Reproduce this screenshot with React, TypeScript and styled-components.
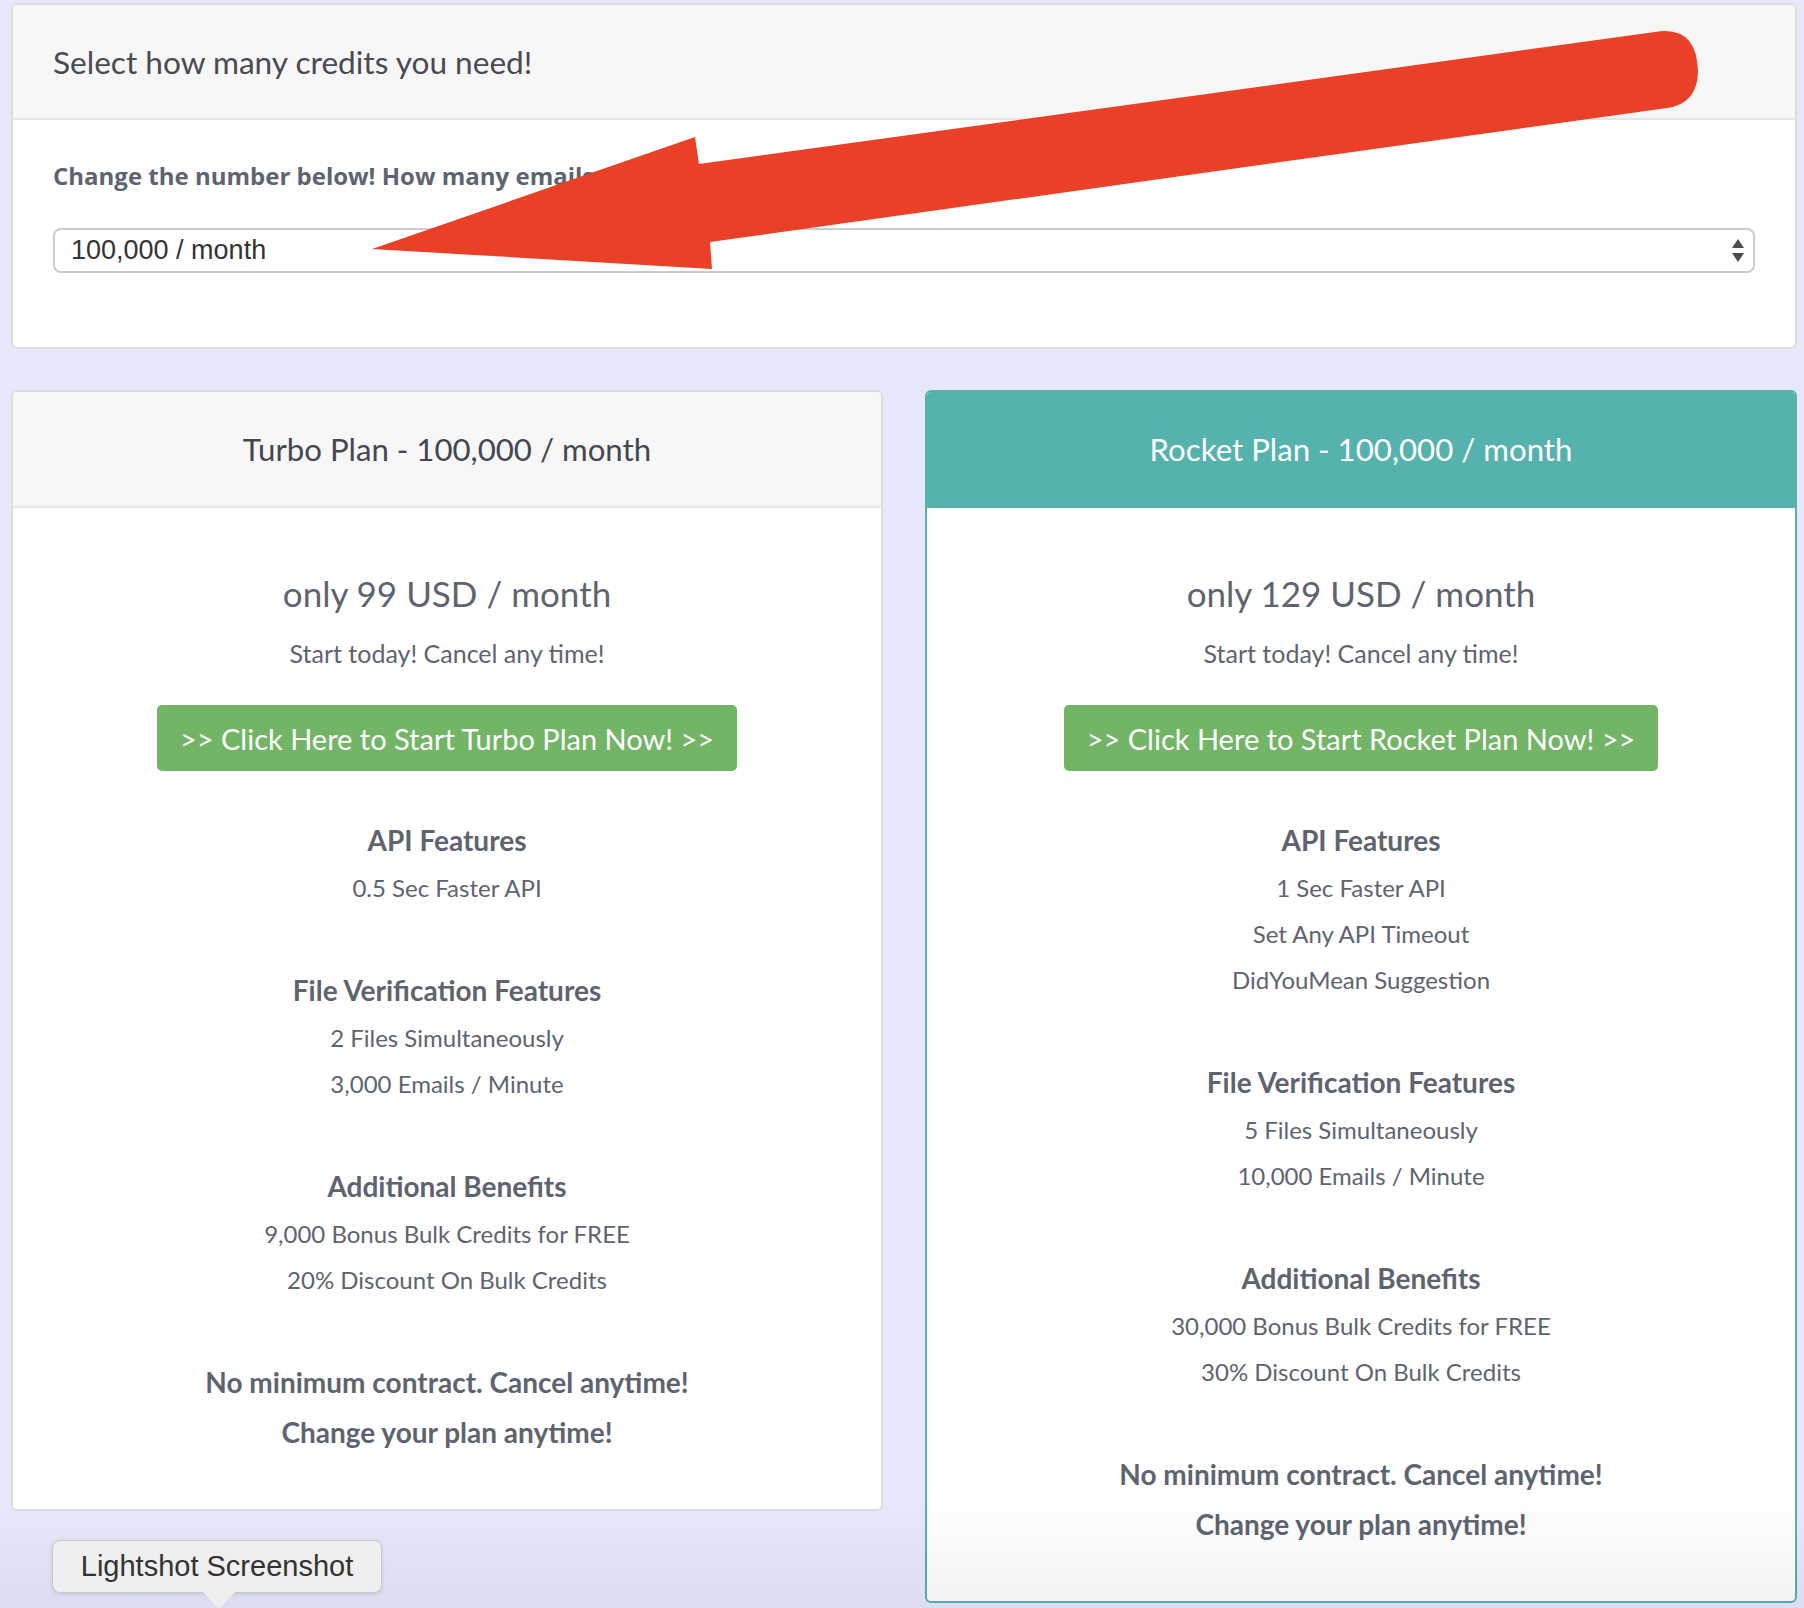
import React from 'react';
import styled, { createGlobalStyle } from 'styled-components';

const GlobalStyle = createGlobalStyle`
  html, body {
    margin: 0;
    padding: 0;
    background: #e7e8fb;
  }
  body {
    font-family: Lato, "Open Sans", sans-serif;
    color: #5d6470;
  }
  * { box-sizing: border-box; }
`;

const Page = styled.div`
  position: relative;
  min-height: 1608px;
  padding: 3px 7px 0 11px;
  overflow: hidden;
`;

const Card = styled.div<{ $accent?: boolean }>`
  background: #fff;
  border: 2px solid ${(p) => (p.$accent ? '#56b2ad' : '#dddddd')};
  border-radius: 6px;
  overflow: hidden;
`;

const TopHeader = styled.div`
  height: 115px;
  display: flex;
  align-items: center;
  padding: 0 40px;
  background: #f7f7f7;
  border-bottom: 2px solid #e6e6e6;
  font-family: Lato, sans-serif;
  font-size: 31.6px;
  color: #474b54;
`;

const TopBody = styled.div`
  padding: 39px 40px 74px;
`;

const Label = styled.div`
  font-family: "Open Sans", sans-serif;
  font-weight: 700;
  font-size: 24px;
  line-height: 34px;
  color: #5d6470;
  white-space: nowrap;
`;

const SelectBox = styled.div`
  margin-top: 35px;
  height: 45px;
  display: flex;
  align-items: center;
  justify-content: space-between;
  padding: 0 8px 0 16px;
  border: 2px solid #cccccc;
  border-radius: 8px;
  font-family: "Liberation Sans", Arial, sans-serif;
  font-size: 27px;
  color: #333;
`;

const Plans = styled.div`
  display: grid;
  grid-template-columns: 1fr 1fr;
  column-gap: 42px;
  align-items: start;
  margin-top: 41px;
`;

const PlanHeader = styled.div<{ $accent?: boolean }>`
  height: 116px;
  display: flex;
  align-items: center;
  justify-content: center;
  background: ${(p) => (p.$accent ? '#56b2ad' : '#f7f7f7')};
  border-bottom: 2px solid ${(p) => (p.$accent ? '#56b2ad' : '#e6e6e6')};
  font-family: Lato, sans-serif;
  font-size: 31.2px;
  color: ${(p) => (p.$accent ? '#ffffff' : '#43474f')};
`;

const PlanBody = styled.div`
  display: flex;
  flex-direction: column;
  align-items: center;
  text-align: center;
  padding: 64px 20px 52px;
`;

const Price = styled.div`
  font-size: 35px;
  line-height: 1.2;
  color: #5d6470;
`;

const Subline = styled.div`
  margin-top: 24px;
  font-size: 25px;
  line-height: 1.2;
  color: #5d6470;
`;

const StartButton = styled.a`
  margin-top: 37px;
  height: 66px;
  display: inline-flex;
  align-items: center;
  justify-content: center;
  padding: 0 23px;
  background: #72b566;
  border-radius: 5px;
  color: #fff;
  font-size: 29px;
  text-decoration: none;
  white-space: nowrap;
`;

const Group = styled.div<{ $first?: boolean }>`
  margin-top: ${(p) => (p.$first ? '46px' : '56px')};
`;

const GroupTitle = styled.div`
  font-size: 28px;
  font-weight: 700;
  line-height: 46px;
  margin-bottom: 2px;
  color: #5d6470;
`;

const Item = styled.div`
  font-size: 24px;
  line-height: 46px;
  color: #5d6470;
`;

const Closing = styled.div`
  margin-top: 54px;
  font-size: 28px;
  font-weight: 700;
  line-height: 50px;
  color: #5d6470;
`;

const ArrowLayer = styled.svg`
  position: absolute;
  top: 0;
  left: 0;
  pointer-events: none;
`;

const Shade = styled.div`
  position: absolute;
  left: 0;
  right: 0;
  bottom: 0;
  height: 110px;
  background: linear-gradient(rgba(40, 40, 80, 0), rgba(40, 40, 80, 0.06));
  pointer-events: none;
`;

const Tooltip = styled.div`
  position: absolute;
  left: 52px;
  top: 1540px;
  width: 330px;
  height: 53px;
  display: flex;
  align-items: center;
  justify-content: center;
  background: #efefef;
  border: 1px solid #c9c9cc;
  border-radius: 8px;
  box-shadow: 0 1px 4px rgba(0, 0, 0, 0.12);
  font-family: "Liberation Sans", Arial, sans-serif;
  font-size: 29px;
  color: #333;

  &::after {
    content: '';
    position: absolute;
    left: 150px;
    bottom: -17px;
    border-left: 16px solid transparent;
    border-right: 16px solid transparent;
    border-top: 17px solid #efefef;
  }
`;

type Group = { title: string; items: string[] };

type Plan = {
  name: string;
  price: string;
  accent?: boolean;
  groups: Group[];
};

const plans: Plan[] = [
  {
    name: 'Turbo',
    price: '99',
    groups: [
      { title: 'API Features', items: ['0.5 Sec Faster API'] },
      { title: 'File Verification Features', items: ['2 Files Simultaneously', '3,000 Emails / Minute'] },
      { title: 'Additional Benefits', items: ['9,000 Bonus Bulk Credits for FREE', '20% Discount On Bulk Credits'] },
    ],
  },
  {
    name: 'Rocket',
    price: '129',
    accent: true,
    groups: [
      { title: 'API Features', items: ['1 Sec Faster API', 'Set Any API Timeout', 'DidYouMean Suggestion'] },
      { title: 'File Verification Features', items: ['5 Files Simultaneously', '10,000 Emails / Minute'] },
      { title: 'Additional Benefits', items: ['30,000 Bonus Bulk Credits for FREE', '30% Discount On Bulk Credits'] },
    ],
  },
];

const SelectArrows = () => (
  <svg width="14" height="26" viewBox="0 0 14 26">
    <path d="M7 1 L13 10 L1 10 Z" fill="#4d4d4d" />
    <path d="M1 15 L13 15 L7 24 Z" fill="#4d4d4d" />
  </svg>
);

const PlanCard = ({ plan }: { plan: Plan }) => (
  <Card $accent={plan.accent}>
    <PlanHeader $accent={plan.accent}>{plan.name} Plan - 100,000 / month</PlanHeader>
    <PlanBody>
      <Price>only {plan.price} USD / month</Price>
      <Subline>Start today! Cancel any time!</Subline>
      <StartButton href="#">&gt;&gt; Click Here to Start {plan.name} Plan Now! &gt;&gt;</StartButton>
      {plan.groups.map((g, i) => (
        <Group key={g.title} $first={i === 0}>
          <GroupTitle>{g.title}</GroupTitle>
          {g.items.map((it) => (
            <Item key={it}>{it}</Item>
          ))}
        </Group>
      ))}
      <Closing>
        No minimum contract. Cancel anytime!
        <br />
        Change your plan anytime!
      </Closing>
    </PlanBody>
  </Card>
);

export default function App() {
  return (
    <Page>
      <GlobalStyle />
      <Card>
        <TopHeader>Select how many credits you need!</TopHeader>
        <TopBody>
          <Label>Change the number below! How many emails do you want to verify?</Label>
          <SelectBox>
            <span>100,000 / month</span>
            <SelectArrows />
          </SelectBox>
        </TopBody>
      </Card>
      <Plans>
        {plans.map((p) => (
          <PlanCard key={p.name} plan={p} />
        ))}
      </Plans>
      <Shade />
      <ArrowLayer width="1804" height="300" viewBox="0 0 1804 300">
        <path
          d="M699 164 L1655 32 Q1697 25 1698 72 Q1697 104 1667 108 L710 242 L712 269 L372 249 L695 137 Z"
          fill="#ea4027"
        />
      </ArrowLayer>
      <Tooltip>Lightshot Screenshot</Tooltip>
    </Page>
  );
}
